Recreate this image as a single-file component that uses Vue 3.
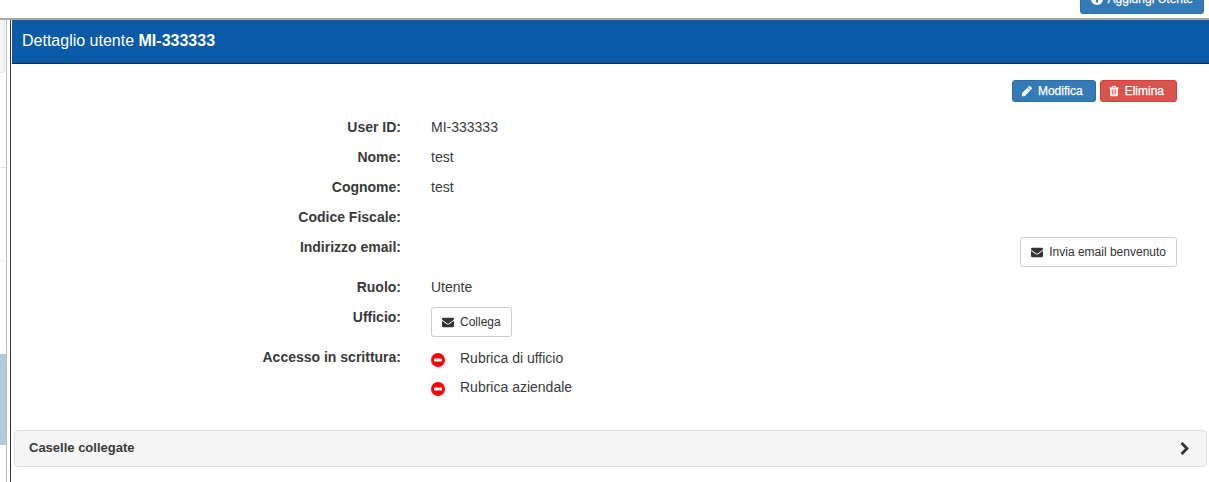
<script setup>
const envelope = 'M1792 710v794q0 66-47 113t-113 47h-1472q-66 0-113-47t-47-113v-794q44 49 101 87 362 246 497 345 57 42 92.5 65.5t94.5 48 110 24.5h2q51 0 110-24.5t94.5-48 92.5-65.5q170-123 498-345 57-39 100-87zm0-294q0 79-49 151t-122 123q-376 261-468 325-10 7-42.5 30.5t-54 38-52 32.5-57.5 27-50 9h-2q-23 0-50-9t-57.5-27-52-32.5-54-38-42.5-30.5q-91-64-262-182.5t-205-142.5q-62-42-117-115.5t-55-136.5q0-78 41.5-130t118.5-52h1472q65 0 112.5 47t47.5 113z'
const pencil = 'M960 416l416 416-832 832h-416v-416zm683 96q0 53-37 90l-166 166-416-416 166-165q36-38 90-38 53 0 91 38l235 234q37 39 37 91z'
const trash = 'M704 1376v-704q0-14-9-23t-23-9h-64q-14 0-23 9t-9 23v704q0 14 9 23t23 9h64q14 0 23-9t9-23zm256 0v-704q0-14-9-23t-23-9h-64q-14 0-23 9t-9 23v704q0 14 9 23t23 9h64q14 0 23-9t9-23zm256 0v-704q0-14-9-23t-23-9h-64q-14 0-23 9t-9 23v704q0 14 9 23t23 9h64q14 0 23-9t9-23zm-544-992h448l-48-117q-7-9-17-11h-317q-10 2-17 11zm928 32v64q0 14-9 23t-23 9h-96v948q0 83-47 143.5t-113 60.5h-832q-66 0-113-58.5t-47-141.5v-952h-96q-14 0-23-9t-9-23v-64q0-14 9-23t23-9h309l70-167q15-37 54-63t79-26h320q40 0 79 26t54 63l70 167h309q14 0 23 9t9 23z'
const chevron = 'M1363 877l-742 742q-19 19-45 19t-45-19l-166-166q-19-19-19-45t19-45l531-531-531-531q-19-19-19-45t19-45l166-166q19-19 45-19t45 19l742 742q19 19 19 45t-19 45z'
</script>

<template>
  <div class="page">
    <div class="top">
      <button class="btn primary add">
        <svg class="ico" viewBox="0 0 24 24"><circle cx="12" cy="12" r="12" fill="#fff"/><path d="M10 5h4v5h5v4h-5v5h-4v-5H5v-4h5z" fill="#337ab7"/></svg>
        Aggiungi Utente
      </button>
    </div>
    <div class="main">
      <aside class="side">
        <div class="side-box"></div>
        <div class="side-line one"></div>
        <div class="side-line two"></div>
        <div class="side-active"></div>
      </aside>
      <section class="panel">
        <h1 class="head">Dettaglio utente <b>MI-333333</b></h1>
        <div class="actions">
          <button class="btn primary">
            <svg class="ico" viewBox="0 0 1792 1792"><path :d="pencil" fill="#fff"/></svg>
            Modifica
          </button>
          <button class="btn danger">
            <svg class="ico" viewBox="0 0 1792 1792"><path :d="trash" fill="#fff"/></svg>
            Elimina
          </button>
        </div>
        <dl class="form">
          <dt>User ID:</dt><dd>MI-333333</dd>
          <dt>Nome:</dt><dd>test</dd>
          <dt>Cognome:</dt><dd>test</dd>
          <dt>Codice Fiscale:</dt><dd></dd>
          <dt>Indirizzo email:</dt>
          <dd class="email">
            <button class="btn default">
              <svg class="ico" viewBox="0 0 1792 1792"><path :d="envelope" fill="#333"/></svg>
              Invia email benvenuto
            </button>
          </dd>
          <dt>Ruolo:</dt><dd>Utente</dd>
          <dt>Ufficio:</dt>
          <dd>
            <button class="btn default">
              <svg class="ico" viewBox="0 0 1792 1792"><path :d="envelope" fill="#333"/></svg>
              Collega
            </button>
          </dd>
          <dt>Accesso in scrittura:</dt>
          <dd class="perms">
            <div class="perm">
              <svg class="no" viewBox="0 0 14 14"><circle cx="7" cy="7" r="7" fill="#f00"/><rect x="3" y="5.6" width="8" height="2.8" rx=".6" fill="#fff"/></svg>
              <span>Rubrica di ufficio</span>
            </div>
            <div class="perm">
              <svg class="no" viewBox="0 0 14 14"><circle cx="7" cy="7" r="7" fill="#f00"/><rect x="3" y="5.6" width="8" height="2.8" rx=".6" fill="#fff"/></svg>
              <span>Rubrica aziendale</span>
            </div>
          </dd>
        </dl>
        <div class="accordion">
          <span class="acc-title">Caselle collegate</span>
          <svg class="chev" viewBox="0 0 1792 1792"><path :d="chevron" fill="#333"/></svg>
        </div>
      </section>
    </div>
  </div>
</template>

<style>
html, body { margin: 0; background: #fff; }
</style>

<style scoped>
.page {
  width: 1209px;
  height: 482px;
  overflow: hidden;
  background: #fff;
  font-family: "Liberation Sans", Arial, sans-serif;
  font-size: 14px;
  color: #3a3a3a;
}
.top {
  height: 18px;
  display: flex;
  justify-content: flex-end;
  padding-right: 5px;
  box-sizing: border-box;
}
.main {
  display: flex;
  height: 464px;
  border-top: 2px solid #a6a6a6;
  box-sizing: border-box;
}
.side {
  position: relative;
  width: 11px;
  flex: none;
  box-sizing: border-box;
  border-right: 1px solid #333;
}
.side::before {
  content: "";
  position: absolute;
  left: 6px;
  top: 0;
  bottom: 0;
  width: 1px;
  background: #bdbdbd;
}
.side-box {
  position: absolute;
  left: 0;
  top: 0;
  width: 5px;
  height: 53px;
  background: #f5f5f5;
  border: 1px solid #e6e6e6;
  border-left: 0;
  border-top: 0;
  border-bottom-right-radius: 3px;
  box-sizing: border-box;
}
.side-line {
  position: absolute;
  left: 0;
  width: 6px;
  height: 1px;
  background: #e8e8e8;
}
.side-line.one { top: 147px; }
.side-line.two { top: 240px; }
.side-active {
  position: absolute;
  left: 0;
  top: 334px;
  width: 6px;
  height: 91px;
  background: #b4c9dc;
}
.panel {
  flex: 1;
  min-width: 0;
  margin-left: 1px;
}
.head {
  margin: 0;
  height: 44px;
  box-sizing: border-box;
  background: #0a5aa8;
  border-bottom: 1px solid #062f5c;
  color: #fff;
  font-size: 16px;
  font-weight: 400;
  line-height: 41px;
  padding-left: 10px;
}
.head b { font-weight: 700; }
.actions {
  display: flex;
  justify-content: flex-end;
  gap: 4px;
  padding: 16px 32px 0 0;
  height: 32px;
}
.btn {
  font: 12px/18px "Liberation Sans", Arial, sans-serif;
  border-radius: 3px;
  border: 1px solid transparent;
  box-sizing: border-box;
  display: inline-flex;
  align-items: center;
  padding: 0 10px;
  white-space: nowrap;
  cursor: pointer;
}
.primary { background: #337ab7; border-color: #2e6da4; color: #fff; -webkit-text-stroke: 0.25px #fff; }
.danger { background: #d9534f; border-color: #d43f3a; color: #fff; -webkit-text-stroke: 0.25px #fff; }
.default { background: #fff; border-color: #ccc; color: #333; height: 30px; }
.actions .btn { height: 22px; padding: 0 12px 0 8px; }
.actions .btn .ico { margin-right: 5px; }
.actions .danger { padding: 0 12px 0 7px; }
.add { height: 30px; margin-top: -16px; }
.add .ico { margin-right: 5px; }
.ico {
  width: 12px;
  height: 12px;
  margin-right: 6px;
  flex: none;
}
.form {
  margin: 0;
  display: grid;
  grid-template-columns: 389px 1fr;
  column-gap: 30px;
  padding-right: 32px;
  line-height: 20px;
}
.form dt {
  font-weight: 700;
  text-align: right;
  margin: 0;
  padding: 5px 0;
}
.form dd {
  margin: 0;
  padding: 5px 0;
}
.form dd.email {
  display: flex;
  justify-content: flex-end;
}
.form dd.perms { padding: 1px 0 0; }
.perm {
  display: flex;
  align-items: center;
  height: 29px;
}
.no {
  width: 14px;
  height: 14px;
  margin-right: 15px;
  flex: none;
  position: relative;
  top: 2px;
}
.accordion {
  width: 1193px;
  height: 37px;
  box-sizing: border-box;
  margin: 29px 0 0 2px;
  background: #f5f5f5;
  border: 1px solid #ddd;
  border-radius: 4px;
  display: flex;
  align-items: center;
  justify-content: space-between;
  padding: 0 14px;
  font-weight: 700;
  font-size: 13px;
}
.acc-title { margin-bottom: 2px; }
.chev { width: 14px; height: 14px; }
</style>
